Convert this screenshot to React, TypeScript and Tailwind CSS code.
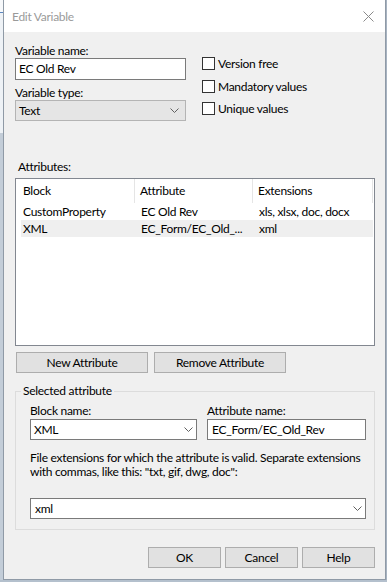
import React from "react";

const Chevron = () => (
  <svg width="9" height="5" viewBox="0 0 9 5" className="shrink-0">
    <path d="M0.5 0.5 L4.5 4.5 L8.5 0.5" fill="none" stroke="#606060" strokeWidth="1" />
  </svg>
);

function Checkbox({ label, className }: { label: string; className?: string }) {
  return (
    <div className={"flex items-center h-[13px] " + (className ?? "")}>
      <span className="w-[13px] h-[13px] border border-[#333333] bg-white shrink-0" />
      <span className="ml-[3px] leading-[14px] whitespace-nowrap">{label}</span>
    </div>
  );
}

function Btn({ children, className }: { children: React.ReactNode; className?: string }) {
  return (
    <div
      className={
        "h-[21px] border border-[#adadad] bg-[#e1e1e1] flex items-center justify-center leading-[14px] " +
        (className ?? "")
      }
    >
      {children}
    </div>
  );
}

export default function App() {
  return (
    <div className="w-[387px] h-[582px] bg-[#b7c2cf] flex flex-col overflow-hidden font-['Lato','Noto_Sans',sans-serif] text-[12px] tracking-[-0.28px] text-black">
      <div className="flex h-[580px]">
        {/* left background strip */}
        <div className="w-[3px] flex flex-col shrink-0">
          <div className="h-[12px] bg-[#f7f9fb]" />
          <div className="h-[1px] bg-[#5b86c0]" />
          <div className="h-[120px] bg-[#eef2f6]" />
          <div className="flex-1 bg-[#c3cdd8]" />
        </div>
        {/* window */}
        <div className="w-[383px] h-[580px] border-l border-r border-b border-[#8f9aa6] flex flex-col shrink-0">
          {/* title bar */}
          <div className="h-[32px] bg-white flex items-center pl-[8px] pr-[6px] shrink-0">
            <span className="text-[#9a9a9a] leading-[14px] mt-[1px]">Edit Variable</span>
            <div className="ml-auto w-[20px] h-[20px] flex items-center justify-center mr-[1px]">
              <svg width="11" height="11" viewBox="0 0 11 11">
                <path d="M0.5 0.5 L10.5 10.5 M10.5 0.5 L0.5 10.5" stroke="#8a8a8a" strokeWidth="1" fill="none" />
              </svg>
            </div>
          </div>
          {/* body */}
          <div className="flex-1 bg-[#f0f0f0] pl-[11px] pr-[9px] flex flex-col">
            {/* top section */}
            <div className="flex">
              <div className="w-[171px] pt-[11px] flex flex-col">
                <div className="h-[15px] leading-[15px]">Variable name:</div>
                <div className="h-[22px] border border-[#7a7a7a] bg-white flex items-center pl-[3px] leading-[14px]">
                  EC Old Rev
                </div>
                <div className="h-[20px] pt-[6px] leading-[14px]">Variable type:</div>
                <div className="h-[21px] border border-[#b4b4b4] bg-[#e5e5e5] flex items-center pl-[3px] pr-[6px] leading-[14px]">
                  <span>Text</span>
                  <span className="ml-auto">
                    <Chevron />
                  </span>
                </div>
              </div>
              <div className="ml-[16px] pt-[25px] flex flex-col">
                <Checkbox label="Version free" />
                <Checkbox label="Mandatory values" className="mt-[10px]" />
                <Checkbox label="Unique values" className="mt-[9px]" />
              </div>
            </div>

            {/* attributes */}
            <div className="mt-[39px] pl-[3px] h-[14px] leading-[14px]">Attributes:</div>
            <div className="mt-[4px] w-[360px] h-[168px] border border-[#828790] bg-white flex flex-col">
              <div className="h-[24px] flex shrink-0">
                <div className="w-[119px] pl-[7px] flex items-center border-r border-[#e5e5e5] leading-[14px]">Block</div>
                <div className="w-[118px] pl-[5px] flex items-center border-r border-[#e5e5e5] leading-[14px]">Attribute</div>
                <div className="w-[120px] pl-[5px] flex items-center border-r border-[#e5e5e5] leading-[14px]">Extensions</div>
              </div>
              <div className="ml-[5px] w-[352px] h-[17px] flex items-center leading-[14px]">
                <div className="w-[115px] pl-[2px] whitespace-nowrap">CustomProperty</div>
                <div className="w-[118px] pl-[5px] whitespace-nowrap">EC Old Rev</div>
                <div className="w-[119px] pl-[5px] whitespace-nowrap">xls, xlsx, doc, docx</div>
              </div>
              <div className="ml-[5px] w-[352px] h-[17px] flex items-center leading-[14px] bg-[#efefef]">
                <div className="w-[115px] pl-[2px] whitespace-nowrap">XML</div>
                <div className="w-[118px] pl-[5px] whitespace-nowrap overflow-hidden">EC_Form/EC_Old_...</div>
                <div className="w-[119px] pl-[5px] whitespace-nowrap">xml</div>
              </div>
            </div>

            {/* attribute buttons */}
            <div className="mt-[6px] ml-[1px] flex gap-[6px]">
              <Btn className="w-[132px]">New Attribute</Btn>
              <Btn className="w-[132px]">Remove Attribute</Btn>
            </div>

            {/* selected attribute group */}
            <div className="relative mt-[18px] w-[360px] h-[139px] border border-[#dcdcdc] pl-[14px] pt-[12px] flex flex-col">
              <span className="absolute left-[5px] top-[-8px] px-[2px] bg-[#f0f0f0] leading-[14px]">Selected attribute</span>
              <div className="flex">
                <div className="w-[167px] flex flex-col">
                  <div className="h-[14px] leading-[14px]">Block name:</div>
                  <div className="mt-[1px] h-[21px] border border-[#7a7a7a] bg-white flex items-center pl-[3px] pr-[3px] leading-[14px]">
                    <span>XML</span>
                    <span className="ml-auto">
                      <Chevron />
                    </span>
                  </div>
                </div>
                <div className="ml-[10px] w-[159px] flex flex-col">
                  <div className="h-[14px] leading-[14px]">Attribute name:</div>
                  <div className="mt-[1px] h-[21px] border border-[#7a7a7a] bg-white flex items-center pl-[4px] leading-[14px]">
                    EC_Form/EC_Old_Rev
                  </div>
                </div>
              </div>
              <div className="mt-[11px] leading-[14px] whitespace-nowrap">
                File extensions for which the attribute is valid. Separate extensions
                <br />
                with commas, like this: "txt, gif, dwg, doc":
              </div>
              <div className="mt-[19px] w-[336px] h-[21px] border border-[#7a7a7a] bg-white flex items-center pl-[4px] pr-[3px] leading-[14px]">
                <span>xml</span>
                <span className="ml-auto">
                  <Chevron />
                </span>
              </div>
            </div>

            {/* dialog buttons */}
            <div className="mt-[17px] flex justify-end gap-[4px] pr-[1px]">
              <Btn className="w-[73px]">OK</Btn>
              <Btn className="w-[73px]">Cancel</Btn>
              <Btn className="w-[73px]">Help</Btn>
            </div>
          </div>
        </div>
        {/* right strip */}
        <div className="w-[1px] bg-[#a7b3c1] shrink-0" />
      </div>
      <div className="h-[2px] bg-[#b4c0cd]" />
    </div>
  );
}
